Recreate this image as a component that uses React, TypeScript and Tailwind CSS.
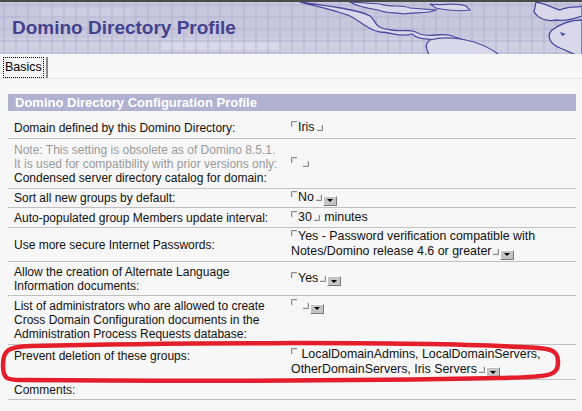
import React from 'react';

const StartMark = () => (
  <svg width="6" height="6" viewBox="0 0 6 6" className="inline-block align-top mt-[1px] mr-[1px]">
    <path d="M0.5 6 V0.5 H6" stroke="#8a8a8a" fill="none" />
    <path d="M1.5 6 V1.5 H6" stroke="#dcdcdc" fill="none" />
  </svg>
);

const EndMark = () => (
  <svg width="6" height="6" viewBox="0 0 6 6" className="inline-block align-baseline ml-[2px] mr-[1px]">
    <path d="M0 5.5 H5.5 V0" stroke="#8a8a8a" fill="none" />
    <path d="M0 4.5 H4.5 V0" stroke="#dcdcdc" fill="none" />
  </svg>
);

const Drop = () => (
  <span className="inline-flex items-center justify-center align-[-1px] w-[14px] h-[10px] bg-[#c4c4c4] border border-t-white border-l-white border-r-[#7a7a7a] border-b-[#7a7a7a]">
    <svg width="6" height="3" viewBox="0 0 6 3">
      <path d="M0 0 H6 L3 3 Z" fill="#000" />
    </svg>
  </span>
);

function Row({ h, label, value, lc, vc }: { h: string; label: React.ReactNode; value: React.ReactNode; lc: string; vc: string }) {
  return (
    <div className={`flex border-b border-[#c0c0c0] ${h}`}>
      <div className={`w-[280px] pl-[6px] flex leading-[14px] text-[12px] text-[#111] ${lc}`}>{label}</div>
      <div className={`flex-1 pl-[3px] pr-2 flex leading-[15px] text-[12.4px] text-[#111] ${vc}`}>{value}</div>
    </div>
  );
}

function Header() {
  const vlines = Array.from({ length: 50 }, (_, i) => i * 12 + 4);
  const hlines = Array.from({ length: 5 }, (_, i) => i * 12 + 3);
  return (
    <div className="relative h-[54px] border-t-2 border-[#4a4a4a] bg-[#c7c7de] overflow-hidden">
      <svg className="absolute inset-0" width="582" height="54" viewBox="0 0 582 54">
        <rect x="0" y="36" width="582" height="18" fill="#d3d3e6" opacity="0.6" />
        <rect x="40" y="6" width="90" height="10" fill="#d6d6e8" opacity="0.5" />
        <rect x="160" y="40" width="120" height="8" fill="#dedeee" opacity="0.6" />
        {vlines.map(x => (
          <line key={x} x1={x} y1="0" x2={x} y2="54" stroke="#b3b3d0" strokeWidth="1" />
        ))}
        {hlines.map(y => (
          <line key={y} x1="0" y1={y} x2="582" y2={y} stroke="#b3b3d0" strokeWidth="1" />
        ))}
        <path d="M300 0 C330 4 360 8 370 14 C378 20 372 26 392 28 C404 30 410 26 420 32 C432 36 440 30 452 34 L470 40 C440 36 420 40 412 32 C400 36 392 30 380 30 C368 28 362 20 350 14 C335 8 315 4 300 0 Z" fill="#d8d8ea" stroke="#4c4ca0" strokeWidth="1.3" />
        <path d="M350 0 L380 2 C392 6 400 2 410 6 L436 8 C428 12 414 10 404 12 C396 10 386 12 378 8 C366 6 356 4 350 0 Z" fill="#d8d8ea" stroke="#4c4ca0" strokeWidth="1.2" />
        <path d="M430 2 C442 4 454 0 466 4 L470 8 C458 10 446 8 436 6 Z" fill="#d8d8ea" stroke="#4c4ca0" strokeWidth="1.2" />
        <path d="M430 38 C444 34 460 36 474 40 C486 44 494 48 500 54 L430 54 C426 48 424 42 430 38 Z" fill="#d8d8ea" stroke="#4c4ca0" strokeWidth="1.3" />
        <path d="M536 0 C548 2 552 6 560 8 C568 4 576 6 582 4 L582 14 C576 16 568 20 556 18 C546 20 538 16 534 10 Z" fill="#d8d8ea" stroke="#4c4ca0" strokeWidth="1.3" />
        <path d="M582 18 C570 18 560 22 552 28 C546 34 550 42 560 46 C570 50 576 54 582 54 Z" fill="#d8d8ea" stroke="#4c4ca0" strokeWidth="1.3" />
        <path d="M560 30 L566 32 L562 34 Z" fill="#4c4ca0" />
      </svg>
      <div className="relative pl-[12px] pt-[15px] text-[19px] font-bold text-[#43438c] leading-[22px]" style={{ fontFamily: '"Liberation Sans", Arial, sans-serif' }}>
        Domino Directory Profile
      </div>
    </div>
  );
}

export default function App() {
  return (
    <div className="relative w-[582px] h-[411px] bg-[#f7f7f7] overflow-hidden" style={{ fontFamily: '"Liberation Sans", Arial, sans-serif' }}>
      <Header />

      {/* tab strip */}
      <div className="flex items-stretch pt-[3px] pl-[3px] h-[25px] border-b border-[#e6e6e6]">
        <div className="px-[1px] border border-dotted border-black text-[12.5px] leading-[17px] text-black h-[21px] flex items-center">Basics</div>
        <div className="ml-[2px] w-[2px] h-[21px] bg-[#8a8a8a]" />
      </div>

      <div className="ml-[8px] w-[568px] mt-[15px]">
        <div className="h-[17px] bg-[#b1b1d1] pl-[7px] text-[13px] font-bold text-white leading-[17px]">
          Domino Directory Configuration Profile
        </div>

        <Row
          h="h-[28px]"
          lc="items-center pt-[6px]"
          vc="items-center pt-[6px]"
          label="Domain defined by this Domino Directory:"
          value={<span><StartMark />Iris<EndMark /></span>}
        />
        <Row
          h="h-[50px]"
          lc="items-center"
          vc="items-center"
          label={
            <div>
              <div className="text-[#9a9a9a]">Note: This setting is obsolete as of Domino 8.5.1.</div>
              <div className="text-[#9a9a9a]">It is used for compatibility with prior versions only:</div>
              <div>Condensed server directory catalog for domain:</div>
            </div>
          }
          value={<span><StartMark />&nbsp;<EndMark /></span>}
        />
        <Row
          h="h-[19px]"
          lc="items-center"
          vc="items-center"
          label="Sort all new groups by default:"
          value={<span><StartMark />No<EndMark /><Drop /></span>}
        />
        <Row
          h="h-[20px]"
          lc="items-center"
          vc="items-center"
          label="Auto-populated group Members update interval:"
          value={<span><StartMark />30<EndMark /> minutes</span>}
        />
        <Row
          h="h-[34px]"
          lc="items-center"
          vc="items-start pt-[1px]"
          label="Use more secure Internet Passwords:"
          value={<span><StartMark />Yes - Password verification compatible with Notes/Domino release 4.6 or greater<EndMark /><Drop /></span>}
        />
        <Row
          h="h-[34px]"
          lc="items-center"
          vc="items-center"
          label={<div>Allow the creation of Alternate Language<br />Information documents:</div>}
          value={<span><StartMark />Yes<EndMark /><Drop /></span>}
        />
        <Row
          h="h-[49px]"
          lc="items-center"
          vc="items-start pt-[2px]"
          label={<div>List of administrators who are allowed to create Cross Domain Configuration documents in the Administration Process Requests database:</div>}
          value={<span><StartMark />&nbsp;<EndMark /><Drop /></span>}
        />
        <Row
          h="h-[35px]"
          lc="items-start pt-[4px]"
          vc="items-center"
          label="Prevent deletion of these groups:"
          value={<span><StartMark />&nbsp;LocalDomainAdmins, LocalDomainServers, OtherDomainServers, Iris Servers<EndMark /><Drop /></span>}
        />
        <Row
          h="h-[20px]"
          lc="items-center"
          vc="items-center"
          label="Comments:"
          value={null}
        />
      </div>

      {/* red annotation */}
      <svg className="absolute left-0 top-0 pointer-events-none" width="582" height="411" viewBox="0 0 582 411">
        <path
          d="M30 346 C150 343 400 341 520 347 C553 348 558 350 558 362 C558 376 550 377 500 378 C350 381 150 381 20 380 C6 380 3 378 3 365 C3 350 8 347 30 346 Z"
          fill="none"
          stroke="#e41e2b"
          strokeWidth="4.5"
        />
      </svg>
    </div>
  );
}
